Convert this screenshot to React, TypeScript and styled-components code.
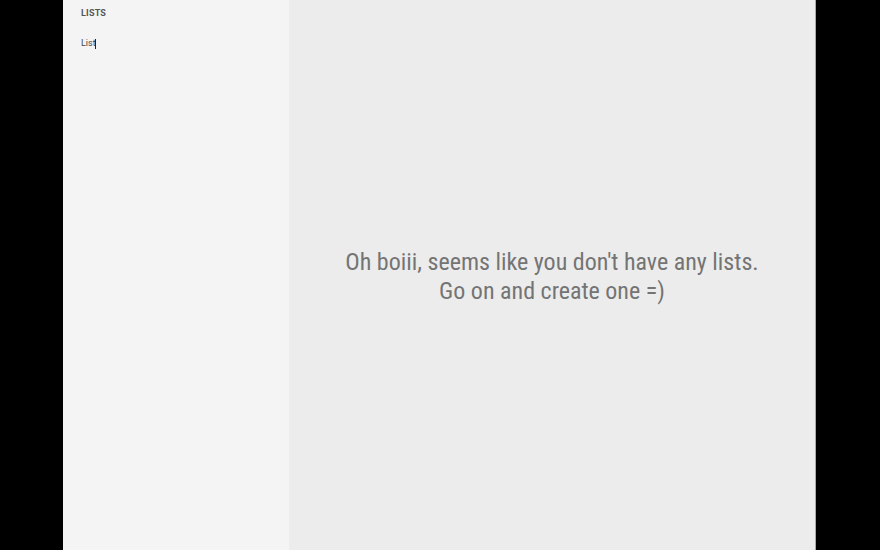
import React from "react";
import styled, { createGlobalStyle } from "styled-components";

const Global = createGlobalStyle`
  html, body { margin: 0; padding: 0; background: #000; }
  #root { width: 880px; height: 550px; }
`;

const Frame = styled.div`
  display: flex;
  width: 880px;
  height: 550px;
  background: #000;
  padding-left: 63px;
  box-sizing: border-box;
`;

const Sidebar = styled.aside`
  width: 226px;
  background: #f4f4f4;
  display: flex;
  flex-direction: column;
  padding: 8px 0 0 18px;
  box-sizing: border-box;
  font-family: Roboto, "Noto Sans", sans-serif;
`;

const Heading = styled.h2`
  margin: 0;
  font-size: 9px;
  font-weight: 700;
  color: #555;
  letter-spacing: 0.2px;
  line-height: 11px;
`;

const ListInput = styled.div`
  margin-top: 19px;
  font-size: 9px;
  color: #444;
  line-height: 11px;
  display: flex;
  align-items: center;
`;

const Caret = styled.span`
  display: inline-block;
  width: 1px;
  height: 10px;
  background: #222;
  margin-left: -1px;
`;

const Main = styled.main`
  width: 527px;
  background: #ececec;
  border-right: 1px solid #aaa;
  display: flex;
  align-items: center;
  justify-content: center;
  padding-top: 4px;
  box-sizing: border-box;
`;

const Message = styled.p`
  margin: 0;
  text-align: center;
  font-family: "Roboto Condensed", "Liberation Sans Narrow", Roboto, sans-serif;
  font-size: 24px;
  font-weight: 400;
  line-height: 29px;
  color: #747474;
`;

export default function App() {
  return (
    <>
      <Global />
      <Frame>
        <Sidebar>
          <Heading>LISTS</Heading>
          <ListInput>
            List<Caret />
          </ListInput>
        </Sidebar>
        <Main>
          <Message>
            Oh boiii, seems like you don't have any lists.
            <br />
            Go on and create one =)
          </Message>
        </Main>
      </Frame>
    </>
  );
}
